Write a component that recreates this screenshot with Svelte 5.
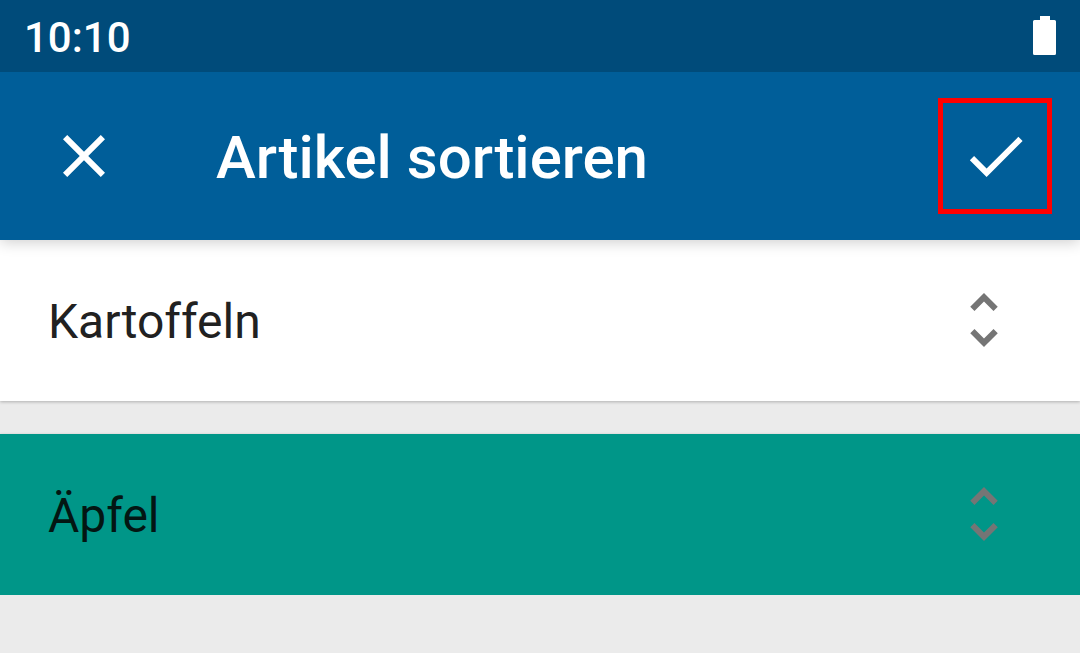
<script lang="ts">
	type Item = { name: string; active: boolean };

	let time = '10:10';
	let items = $state<Item[]>([
		{ name: 'Kartoffeln', active: false },
		{ name: 'Äpfel', active: true }
	]);
</script>

<svelte:head>
	<title>Artikel sortieren</title>
</svelte:head>

<div class="screen">
	<div class="status">
		<span class="label">{time}</span>
		<svg class="battery" viewBox="0 0 23 40" aria-hidden="true">
			<path d="M7 0h10v4h4.500a1.500 1.500 0 0 1 1.500 1.500v32a1.500 1.500 0 0 1-1.500 1.500h-20A1.500 1.500 0 0 1 0 37.500v-32A1.500 1.500 0 0 1 1.500 4H7z" />
		</svg>
	</div>

	<header>
		<button class="close" aria-label="Schließen">
			<svg class="icon" viewBox="0 0 24 24">
				<path
					d="M19 6.41L17.59 5 12 10.59 6.41 5 5 6.41 10.59 12 5 17.59 6.41 19 12 13.41 17.59 19 19 17.59 13.41 12z"
				/>
			</svg>
		</button>
		<h1 class="label">Artikel sortieren</h1>
		<button class="confirm" aria-label="Fertig">
			<svg class="icon" viewBox="0 0 24 24">
				<path d="M9.200 16.170L5.030 12l-1.420 1.410L9.200 19 21.200 7l-1.410-1.410z" />
			</svg>
		</button>
	</header>

	<ul>
		{#each items as item}
			<li class:active={item.active}>
				<span class="label">{item.name}</span>
				<button class="handle" aria-label="{item.name} verschieben">
					<svg class="icon" viewBox="0 0 24 24">
						<path
							d="M12 5.83L15.17 9l1.41-1.41L12 3 7.41 7.59 8.83 9 12 5.83zm0 12.34L8.83 15l-1.41 1.41L12 21l4.59-4.59L15.17 15 12 18.17z"
						/>
					</svg>
				</button>
			</li>
		{/each}
	</ul>
</div>

<style>
	:global(body) {
		background: #ebebeb;
	}
	.screen {
		font-family: Roboto, 'Noto Sans', sans-serif;
	}
	.status {
		position: relative;
		z-index: 2;
		display: flex;
		align-items: center;
		justify-content: space-between;
		box-sizing: border-box;
		height: 72px;
		padding: 0 24px;
		background: #004b7a;
		color: #fff;
		font-size: 42px;
		font-weight: 500;
		line-height: 48px;
	}
	.battery {
		width: 23px;
		height: 40px;
		fill: currentColor;
	}
	.label {
		padding-top: 4px;
	}
	header {
		position: relative;
		z-index: 1;
		display: flex;
		align-items: center;
		box-sizing: border-box;
		height: 168px;
		padding: 0 28px 0 48px;
		background: #005e99;
		color: #fff;
		box-shadow: 0 2px 14px rgba(0, 0, 0, 0.2);
	}
	h1 {
		flex: 1;
		margin: 0 0 0 96px;
		font-size: 60px;
		font-weight: 500;
		line-height: 72px;
	}
	button {
		display: flex;
		align-items: center;
		justify-content: center;
		padding: 0;
		border: 0;
		background: none;
		color: inherit;
		cursor: pointer;
	}
	.confirm {
		box-sizing: border-box;
		width: 114px;
		height: 116px;
		border: 5px solid #f00;
	}
	.icon {
		display: block;
		width: 72px;
		height: 72px;
		fill: currentColor;
	}
	ul {
		display: grid;
		gap: 33px;
		margin: 0;
		padding: 0;
		list-style: none;
	}
	li {
		display: flex;
		align-items: center;
		justify-content: space-between;
		height: 160px;
		padding: 0 60px 0 48px;
		border-bottom: 1px solid transparent;
		background: #fff;
		color: #212121;
		font-size: 48px;
		line-height: 56px;
		box-shadow: 0 1px 3px rgba(0, 0, 0, 0.25);
	}
	li.active {
		background: #009688;
		color: #031613;
	}
	.handle {
		color: #757575;
		cursor: grab;
	}
</style>
